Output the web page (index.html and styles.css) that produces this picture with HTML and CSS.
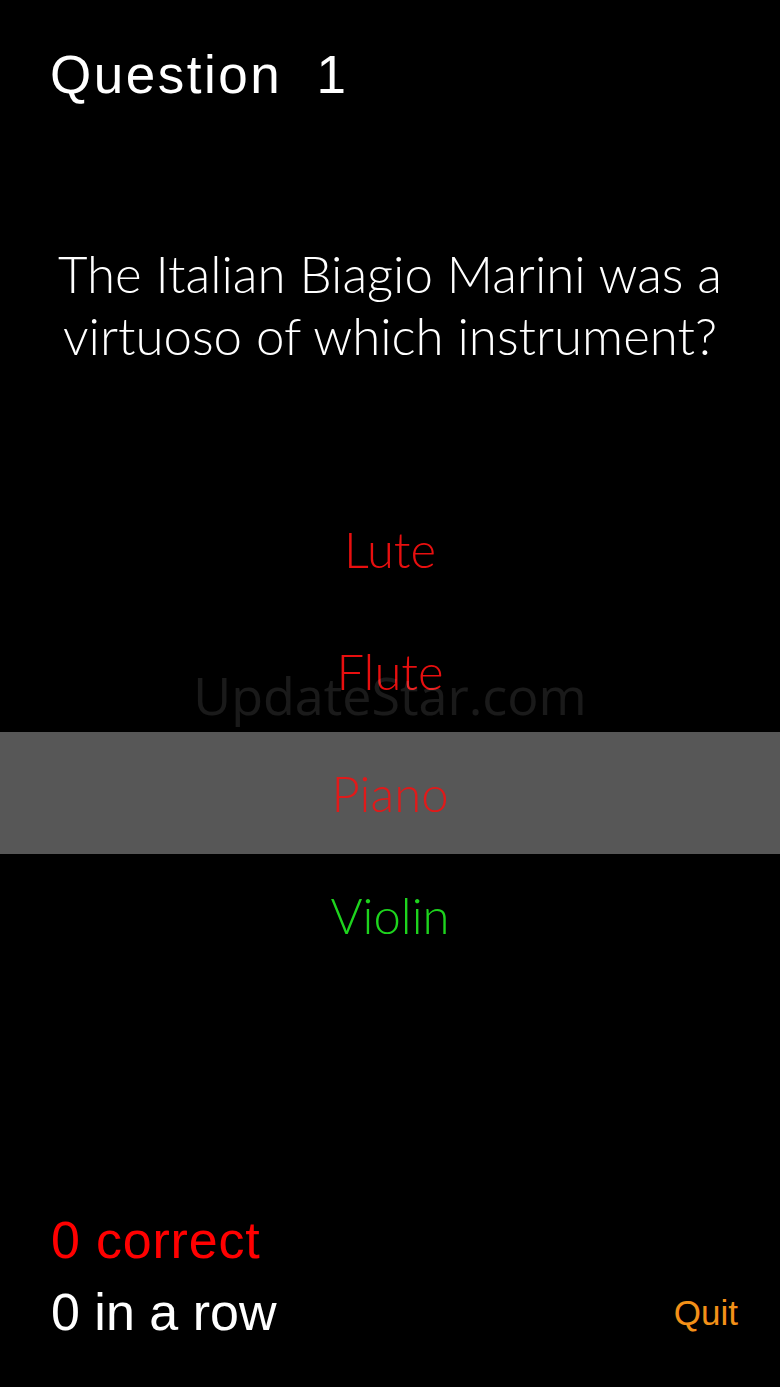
FILE: index.html
```html
<!DOCTYPE html>
<html lang="en">
<head>
<meta charset="utf-8">
<title>Quiz</title>
<link rel="stylesheet" href="styles.css">
</head>
<body>
<div class="screen">
  <header class="title">Question&nbsp;&nbsp;1</header>
  <p class="question">The Italian Biagio Marini was a<br>virtuoso of which instrument?</p>
  <ul class="answers">
    <li class="answer wrong">Lute</li>
    <li class="answer wrong">Flute</li>
    <li class="answer wrong selected">Piano</li>
    <li class="answer right">Violin</li>
  </ul>
  <div class="watermark">UpdateStar.com</div>
  <footer class="footer">
    <div class="scores">
      <div class="score correct">0 correct</div>
      <div class="score streak">0 in a row</div>
    </div>
    <div class="quit">Quit</div>
  </footer>
</div>
</body>
</html>
```
FILE: styles.css
```css
html, body {
  margin: 0;
  padding: 0;
  background: #000;
}
.screen {
  position: relative;
  width: 780px;
  height: 1387px;
  display: flex;
  flex-direction: column;
  overflow: hidden;
  color: #fff;
}
.title {
  margin: 45px 0 0 50px;
  font-family: "Liberation Sans", Arial, sans-serif;
  font-size: 53px;
  line-height: 60px;
  letter-spacing: 2.5px;
}
.question {
  margin: 138px 0 0 0;
  text-align: center;
  font-family: Lato, sans-serif;
  font-weight: 300;
  font-size: 51px;
  line-height: 62px;
}
.answers {
  list-style: none;
  margin: 121px 0 0 0;
  padding: 0;
}
.answer {
  height: 122px;
  display: flex;
  align-items: center;
  justify-content: center;
  font-family: Lato, sans-serif;
  font-weight: 300;
  font-size: 49px;
}
.wrong { color: #e80f0f; }
.right { color: #1ed41e; }
.selected { background: #575757; color: #e01a1a; }
.watermark {
  position: absolute;
  left: 0;
  right: 0;
  top: 660px;
  text-align: center;
  font-family: "Open Sans", sans-serif;
  font-size: 52px;
  line-height: 70px;
  color: rgba(255,255,255,0.1);
  pointer-events: none;
}
.footer {
  margin-top: auto;
  margin-bottom: 39px;
  padding: 0 42px 0 51px;
  display: flex;
  justify-content: space-between;
  align-items: flex-end;
  font-family: "Liberation Sans", Arial, sans-serif;
}
.score {
  font-size: 52px;
  line-height: 72px;
}
.correct { color: #ff0000; letter-spacing: 0.8px; }
.streak { color: #fff; }
.quit {
  color: #f39018;
  font-size: 35px;
  line-height: 40px;
  margin-bottom: 15px;
}
```
